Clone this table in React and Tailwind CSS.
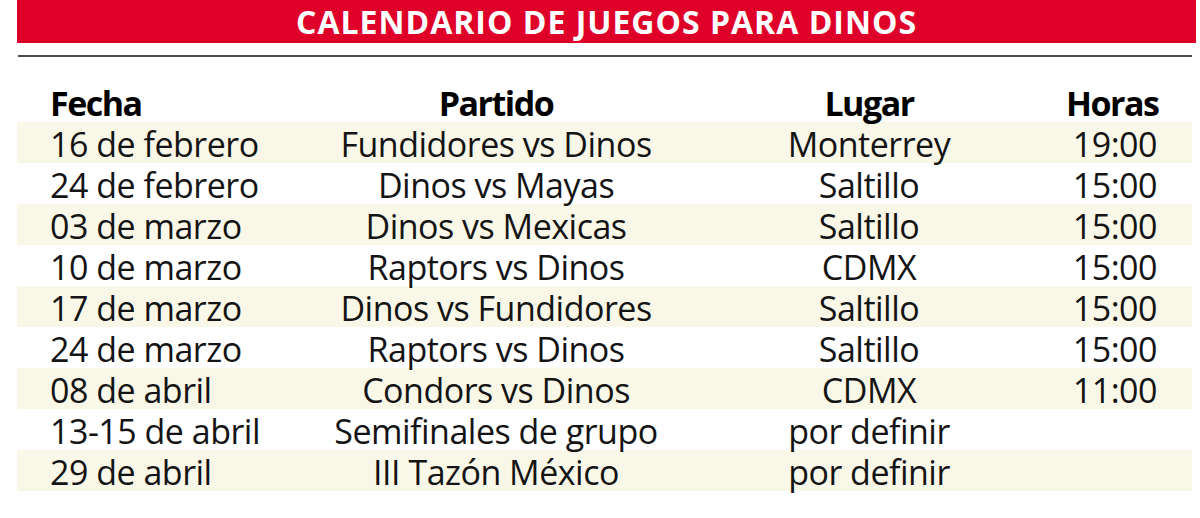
const games = [
  ["16 de febrero", "Fundidores vs Dinos", "Monterrey", "19:00"],
  ["24 de febrero", "Dinos vs Mayas", "Saltillo", "15:00"],
  ["03 de marzo", "Dinos vs Mexicas", "Saltillo", "15:00"],
  ["10 de marzo", "Raptors vs Dinos", "CDMX", "15:00"],
  ["17 de marzo", "Dinos vs Fundidores", "Saltillo", "15:00"],
  ["24 de marzo", "Raptors vs Dinos", "Saltillo", "15:00"],
  ["08 de abril", "Condors vs Dinos", "CDMX", "11:00"],
  ["13-15 de abril", "Semifinales de grupo", "por definir", ""],
  ["29 de abril", "III Tazón México", "por definir", ""],
];

const cols = "grid grid-cols-[270px_352px_394px_91px]";

export default function App() {
  return (
    <div className="w-[1200px] h-[518px] bg-white font-['Open_Sans',sans-serif] overflow-hidden">
      {/* banner */}
      <div className="ml-[17px] w-[1179px] h-[43px] bg-[#df0029] flex items-center justify-center">
        <h1 className="text-white font-bold text-[32px] leading-[43px] tracking-[1px]">
          CALENDARIO DE JUEGOS PARA DINOS
        </h1>
      </div>

      <div className="ml-[18px] mt-[12px] w-[1174px] h-[2px] bg-[#4a4a4a]" />

      <div className="ml-[17px] w-[1175px] pl-[33px] pr-[35px]">
        {/* header */}
        <div className={`${cols} h-[65px] items-end text-[34px] leading-[38px] font-bold text-black tracking-[-1.5px]`}>
          <div>Fecha</div>
          <div className="text-center">Partido</div>
          <div className="text-center">Lugar</div>
          <div className="text-right">Horas</div>
        </div>
      </div>

      <div className="ml-[17px] w-[1175px]">
        {games.map((g, i) => (
          <div
            key={i}
            className={`h-[41px] pl-[33px] pr-[35px] ${i % 2 === 0 ? "bg-[#f9f8e8]" : "bg-white"}`}
          >
            <div className={`${cols} pt-[3px] text-[34px] leading-[38px] text-[#141414] whitespace-nowrap tracking-[-0.5px]`}>
              <div>{g[0]}</div>
              <div className="text-center">{g[1]}</div>
              <div className="text-center">{g[2]}</div>
              <div className="text-right">{g[3]}</div>
            </div>
          </div>
        ))}
      </div>
    </div>
  );
}
